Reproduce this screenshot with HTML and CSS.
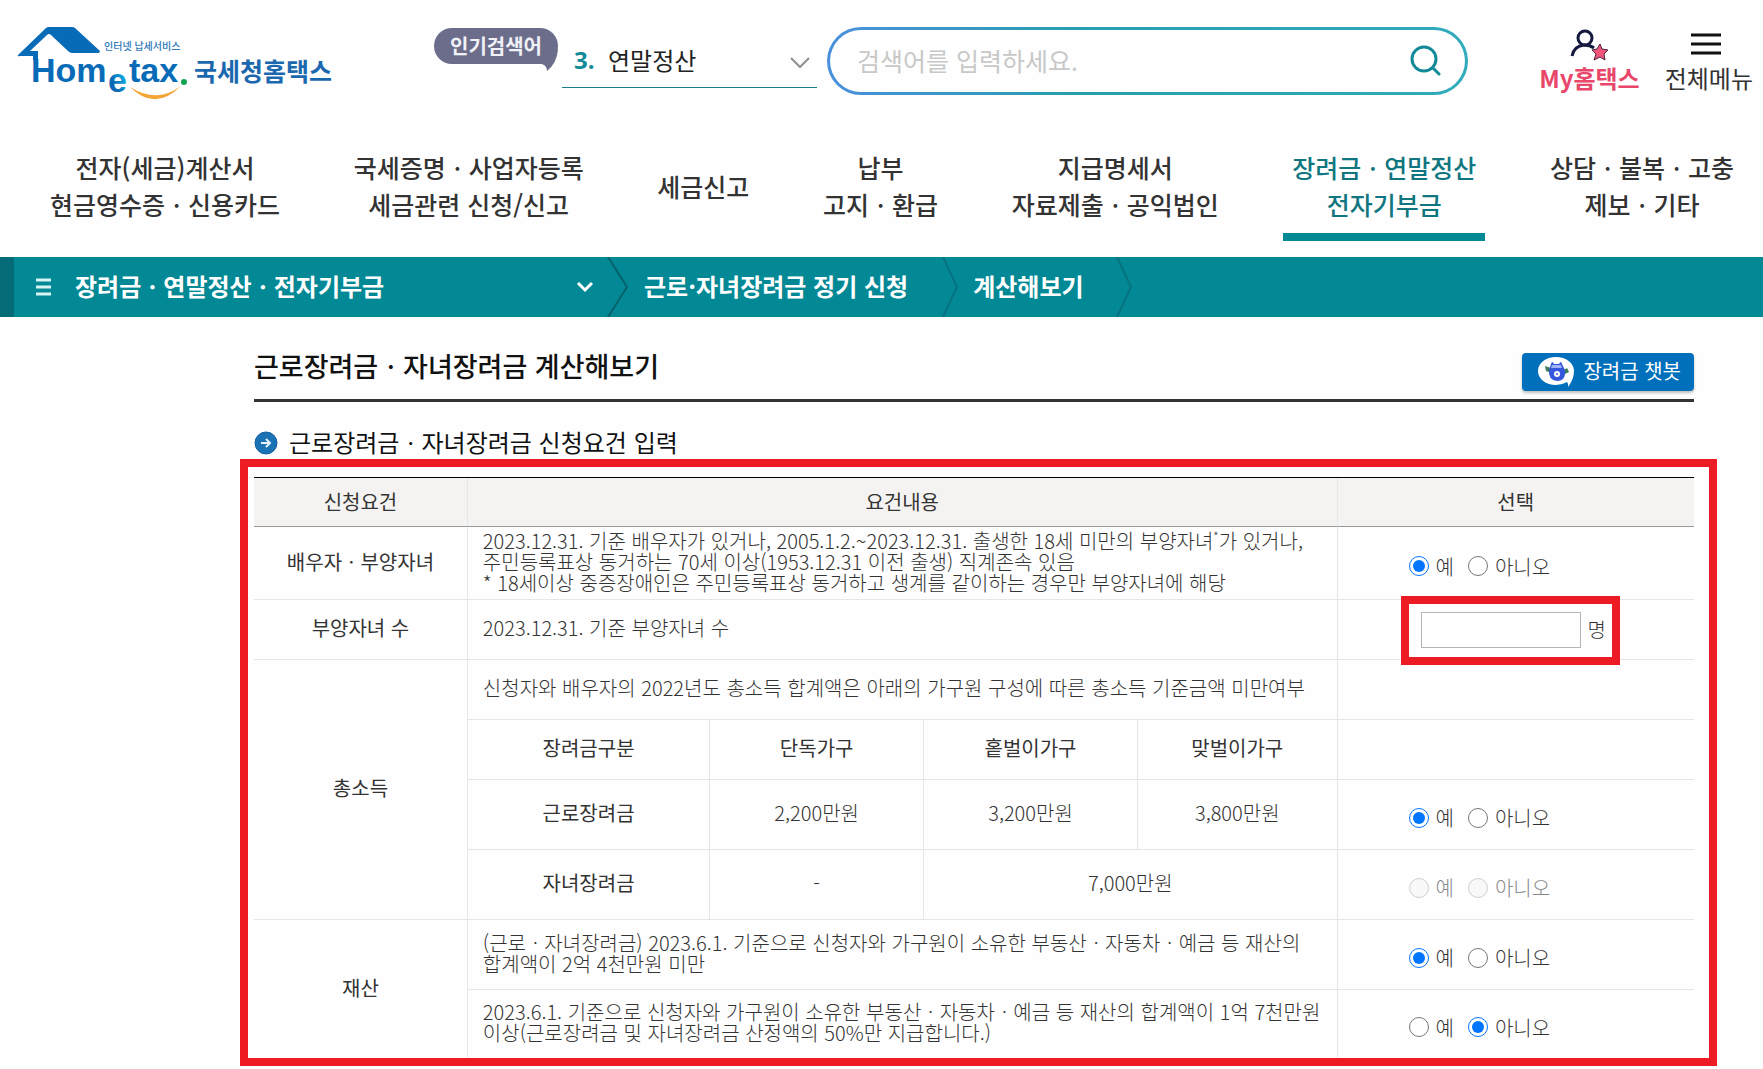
FILE: index.html
```html
<!DOCTYPE html>
<html lang="ko">
<head>
<meta charset="utf-8">
<title>국세청홈택스 - 근로장려금ㆍ자녀장려금 계산해보기</title>
<meta name="viewport" content="width=device-width, initial-scale=1">
<link rel="stylesheet" href="styles.css">
</head>
<body>
<header class="header">
  <a class="logo" href="#" aria-label="국세청홈택스">
    <svg width="320" height="80" viewBox="16 22 320 80" aria-hidden="true">
      <defs>
        <linearGradient id="eFill" x1="0" y1="1" x2="1" y2="0">
          <stop offset="0.35" stop-color="#0a6ab6"/>
          <stop offset="0.8" stop-color="#10b5e8"/>
        </linearGradient>
      </defs>
      <path fill="#086bb7" d="M18 55 L46 28 Q47 27 49 27 H72 Q74 27 75 28 L100 51 Q100 53 98 53 H72 Q70 53 68 51 L51 35 Q49 33 47 35 L30 51 H38 V60 H33 V56 H20 Q17 57 18 55 Z"/>
      <text class="logo-latin" x="31" y="82">Hom</text>
      <text class="logo-latin" x="108" y="92" fill="url(#eFill)">e</text>
      <text class="logo-latin" x="129" y="82">tax</text>
      <circle cx="184" cy="82" r="3" fill="#12a352"/>
      <path fill="#f3a536" d="M130 87 Q155 112 181 86 Q157 104 130 87 Z"/>
      <text class="logo-slogan" x="104" y="50">인터넷 납세서비스</text>
      <text class="logo-name" x="194" y="81">국세청홈택스</text>
    </svg>
  </a>

  <div class="popular">
    <span class="popular-badge">인기검색어
      <svg class="popular-tail" width="20" height="22" viewBox="0 0 20 22" aria-hidden="true"><path fill="#6b6d8a" d="M20 0 Q19 14 9 22 Q9 15 0 14 Z"/></svg>
    </span>
    <div class="popular-pick">
      <label for="popular-term">3.</label>
      <select id="popular-term"><option>연말정산</option></select>
      <svg class="popular-arrow" width="20" height="14" viewBox="0 0 20 14" aria-hidden="true"><path d="M1 2 L10 11 L19 2" fill="none" stroke="#8f8f8f" stroke-width="2"/></svg>
    </div>
  </div>

  <form class="search">
    <input type="text" placeholder="검색어를 입력하세요." aria-label="검색어">
    <button type="button" aria-label="검색">
      <svg width="32" height="32" viewBox="0 0 32 32" fill="none" stroke="#128a98" stroke-width="3" stroke-linecap="round"><circle cx="15" cy="15" r="12"/><path d="M24 24 L30 30"/></svg>
    </button>
  </form>

  <div class="tools">
    <a class="tool tool-my" href="#">
      <svg width="40" height="34" viewBox="0 0 40 34" aria-hidden="true">
        <g fill="none" stroke="#15193f" stroke-width="3"><circle cx="16" cy="10" r="7"/><path d="M3 28 Q5 18 15 17 Q21 17 25 20"/></g>
        <path d="M31 16 L33 21 L39 22 L35 26 L36 32 L31 29 L25 32 L27 26 L23 22 L28 21 Z" fill="#f2557a" stroke="#4a2340" stroke-width="1" stroke-linejoin="round"/>
      </svg>
      <span>My홈택스</span>
    </a>
    <a class="tool" href="#">
      <svg width="36" height="34" viewBox="0 0 36 34" aria-hidden="true"><path d="M0 7 H30 M0 16 H30 M0 25 H30" stroke="#111" stroke-width="3"/></svg>
      <span>전체메뉴</span>
    </a>
  </div>
</header>

<nav class="menu" aria-label="주 메뉴">
  <a href="#">전자(세금)계산서<br>현금영수증ㆍ신용카드</a>
  <a href="#">국세증명ㆍ사업자등록<br>세금관련 신청/신고</a>
  <a href="#">세금신고</a>
  <a href="#">납부<br>고지ㆍ환급</a>
  <a href="#">지급명세서<br>자료제출ㆍ공익법인</a>
  <a href="#" class="active">장려금ㆍ연말정산<br>전자기부금</a>
  <a href="#">상담ㆍ불복ㆍ고충<br>제보ㆍ기타</a>
</nav>

<nav class="path" aria-label="현재 위치">
  <button type="button" class="path-root">
    <svg width="15" height="18" viewBox="0 0 15 18" aria-hidden="true"><path d="M0 2 H15 M0 9 H15 M0 16 H15" stroke="#d9f4f4" stroke-width="3"/></svg>
    <span>장려금ㆍ연말정산ㆍ전자기부금</span>
    <svg class="path-arrow" width="18" height="14" viewBox="0 0 18 14" aria-hidden="true"><path d="M2 3 L9 10 L16 3" fill="none" stroke="#fff" stroke-width="3"/></svg>
  </button>
  <svg class="path-sep" width="22" height="60" viewBox="0 0 22 60" aria-hidden="true"><path d="M1 0 L20 30 L1 60" fill="none" stroke="#05626d" stroke-width="2"/></svg>
  <a class="path-sub" href="#">근로·자녀장려금 정기 신청</a>
  <svg class="path-sep" width="16" height="60" viewBox="0 0 16 60" aria-hidden="true"><path d="M1 0 L15 30 L1 60" fill="none" stroke="#077280" stroke-width="2"/></svg>
  <a class="path-leaf" href="#">계산해보기</a>
  <svg class="path-sep" width="16" height="60" viewBox="0 0 16 60" aria-hidden="true"><path d="M1 0 L15 30 L1 60" fill="none" stroke="#077280" stroke-width="2"/></svg>
</nav>

<main class="content">
  <div class="title-row">
    <h1>근로장려금ㆍ자녀장려금 계산해보기</h1>
    <button type="button" class="chatbot">
      <svg width="38" height="32" viewBox="0 0 38 32" aria-hidden="true">
        <path fill="#fff" d="M18 1 C28 1 36 7 36 15 C36 20 34 26 30 31 Q31 28 29 26 Q24 29 18 29 C8 29 0 23 0 15 C0 7 8 1 18 1 Z"/>
        <path fill="#3a7d58" d="M7 10 L16 13 L14 17 L8 15 Z M29 12 L31 16 L25 19 L23 16 Z"/>
        <path fill="#3657dd" d="M13 8 Q14 4 16 8 L21 8 Q23 4 24 8 L27 14 Q28 25 19 25 Q10 24 11 14 Z"/>
        <path fill="#9fb2fa" d="M14 9 H23 L24 12 H13 Z"/>
        <circle cx="19" cy="18" r="3" fill="#fff"/><circle cx="19" cy="18" r="1" fill="#3657dd"/>
      </svg>
      <span>장려금 챗봇</span>
    </button>
  </div>

  <h2>
    <svg width="24" height="24" viewBox="0 0 24 24" aria-hidden="true"><circle cx="12" cy="12" r="11" fill="#1a73b5" stroke="#155f9e" stroke-width="1"/><path d="M7 12 H16 M12 8 L16 12 L12 16" fill="none" stroke="#e6f3ff" stroke-width="2"/></svg>
    <span>근로장려금ㆍ자녀장려금 신청요건 입력</span>
  </h2>

  <div class="marked">
    <table>
      <colgroup><col class="c-item"><col class="c-kind"><col class="c-home"><col class="c-home"><col class="c-last"><col class="c-pick"></colgroup>
      <thead>
        <tr><th scope="col">신청요건</th><th scope="col" colspan="4">요건내용</th><th scope="col">선택</th></tr>
      </thead>
      <tbody>
        <tr class="row-tall">
          <th scope="row">배우자ㆍ부양자녀</th>
          <td colspan="4">2023.12.31. 기준 배우자가 있거나, 2005.1.2.~2023.12.31. 출생한 18세 미만의 부양자녀<sup>*</sup>가 있거나,<br>주민등록표상 동거하는 70세 이상(1953.12.31 이전 출생) 직계존속 있음<br>* 18세이상 중증장애인은 주민등록표상 동거하고 생계를 같이하는 경우만 부양자녀에 해당</td>
          <td class="pick"><div class="choice"><label><input type="radio" name="spouse" checked>예</label><label><input type="radio" name="spouse">아니오</label></div></td>
        </tr>
        <tr class="row-short">
          <th scope="row">부양자녀 수</th>
          <td colspan="4">2023.12.31. 기준 부양자녀 수</td>
          <td class="count"><div class="count-box"><input type="text" id="children"><label for="children">명</label></div></td>
        </tr>
        <tr class="row-short">
          <th scope="row" rowspan="4">총소득</th>
          <td colspan="4">신청자와 배우자의 2022년도 총소득 합계액은 아래의 가구원 구성에 따른 총소득 기준금액 미만여부</td>
          <td></td>
        </tr>
        <tr class="row-short">
          <th scope="col">장려금구분</th><th scope="col">단독가구</th><th scope="col">홑벌이가구</th><th scope="col">맞벌이가구</th>
          <td></td>
        </tr>
        <tr class="row-mid">
          <th scope="row">근로장려금</th><td class="amount">2,200만원</td><td class="amount">3,200만원</td><td class="amount">3,800만원</td>
          <td class="pick"><div class="choice"><label><input type="radio" name="work" checked>예</label><label><input type="radio" name="work">아니오</label></div></td>
        </tr>
        <tr class="row-mid">
          <th scope="row">자녀장려금</th><td class="amount">-</td><td class="amount" colspan="2">7,000만원</td>
          <td class="pick"><div class="choice off"><label><input type="radio" name="child" disabled>예</label><label><input type="radio" name="child" disabled>아니오</label></div></td>
        </tr>
        <tr class="row-mid">
          <th scope="row" rowspan="2">재산</th>
          <td colspan="4">(근로ㆍ자녀장려금) 2023.6.1. 기준으로 신청자와 가구원이 소유한 부동산ㆍ자동차ㆍ예금 등 재산의<br>합계액이 2억 4천만원 미만</td>
          <td class="pick"><div class="choice"><label><input type="radio" name="asset1" checked>예</label><label><input type="radio" name="asset1">아니오</label></div></td>
        </tr>
        <tr class="row-end">
          <td colspan="4">2023.6.1. 기준으로 신청자와 가구원이 소유한 부동산ㆍ자동차ㆍ예금 등 재산의 합계액이 1억 7천만원<br>이상(근로장려금 및 자녀장려금 산정액의 50%만 지급합니다.)</td>
          <td class="pick"><div class="choice"><label><input type="radio" name="asset2">예</label><label><input type="radio" name="asset2" checked>아니오</label></div></td>
        </tr>
      </tbody>
    </table>
  </div>
</main>
</body>
</html>
```
FILE: styles.css
```css
* { box-sizing: border-box; }

body {
  margin: 0;
  background: #fefefe;
  color: #333;
  font-family: "Noto Sans CJK KR", sans-serif;
  font-size: 20px;
}

a { color: inherit; text-decoration: none; }

button, input, select { font: inherit; color: inherit; }

svg { display: block; flex: none; }

/* header */
.header {
  display: flex;
  align-items: flex-start;
  height: 124px;
  padding: 22px 10px 0 16px;
}

.logo { flex: none; margin-right: 98px; }

.logo-latin {
  font: bold 34px "Liberation Sans", sans-serif;
  fill: #086bb7;
}

.logo-latin[fill] { fill: url(#eFill); }

.logo-slogan { font-size: 10px; font-weight: 500; fill: #2f78ba; }

.logo-name { font-size: 25px; font-weight: 700; fill: #1b68af; }

.popular { display: flex; flex: none; gap: 4px; }

.popular-badge {
  position: relative;
  width: 124px;
  height: 36px;
  margin-top: 6px;
  border-radius: 18px;
  background: #6b6d8a;
  color: #f1f1f8;
  font-weight: 700;
  font-size: 20px;
  line-height: 35px;
  text-align: center;
}

.popular-tail { position: absolute; right: 0; bottom: -7px; }

.popular-pick {
  position: relative;
  display: flex;
  align-items: center;
  width: 255px;
  height: 66px;
  padding: 10px 0 0 12px;
  border-bottom: 1px solid #197f8b;
}

.popular-pick label {
  width: 34px;
  color: #128a98;
  font: bold 24px "Open Sans", sans-serif;
}

.popular-pick select {
  flex: 1;
  padding: 0;
  border: 0;
  background: transparent;
  color: #222;
  font-size: 24px;
  line-height: 36px;
  appearance: none;
}

.popular-arrow { position: absolute; right: 7px; top: 34px; pointer-events: none; }

.search {
  display: flex;
  flex: 1;
  align-items: center;
  height: 68px;
  margin: 5px 71px 0 10px;
  padding: 0 24px 3px 27px;
  border: 3px solid transparent;
  border-radius: 34px;
  background:
    linear-gradient(#fefefe, #fefefe) padding-box,
    linear-gradient(90deg, #4a90dc, #279fae 40%, #2fabbc) border-box;
}

.search input {
  flex: 1;
  min-width: 0;
  padding: 0;
  border: 0;
  outline: 0;
  background: transparent;
  font-size: 25px;
}

.search input::placeholder { color: #c8c8c8; opacity: 1; }

.search button { padding: 0; border: 0; background: transparent; }

.tools { display: flex; flex: none; gap: 25px; margin-top: 6px; }

.tool {
  display: flex;
  flex-direction: column;
  align-items: center;
  font-size: 24px;
  line-height: 32px;
}

.tool-my { color: #e8476b; font-weight: 700; }

/* main menu */
.menu {
  display: flex;
  justify-content: space-between;
  height: 133px;
  padding: 25px 29px 16px 50px;
  font-size: 25px;
  font-weight: 500;
  line-height: 37px;
  text-align: center;
  white-space: nowrap;
}

.menu a { display: flex; flex-direction: column; justify-content: center; padding-bottom: 18px; }

.menu .active {
  margin: 0 -9px;
  padding: 0 9px 10px;
  border-bottom: 8px solid #028995;
  color: #107680;
}

/* location bar */
.path {
  display: flex;
  align-items: center;
  height: 60px;
  border-left: 14px solid #056b77;
  background: #028995;
  color: #fff;
  font-size: 24px;
  font-weight: 700;
  white-space: nowrap;
}

.path-root {
  display: flex;
  align-items: center;
  gap: 24px;
  width: 593px;
  height: 60px;
  padding: 0 13px 0 22px;
  border: 0;
  background: transparent;
}

.path-root span { padding-bottom: 4px; }

.path-arrow { margin-left: auto; }

.path-sub { padding: 0 34px 4px 15px; }

.path-leaf { padding: 0 32px 4px 15px; }

/* content */
.content { padding: 36px 69px 0 254px; }

.title-row {
  display: flex;
  align-items: flex-start;
  justify-content: space-between;
  height: 49px;
  border-bottom: 3px solid #333;
}

h1 {
  margin: 0;
  color: #111;
  font-size: 27px;
  font-weight: 500;
  line-height: 26px;
}

.chatbot {
  display: flex;
  align-items: center;
  gap: 7px;
  height: 38px;
  padding: 0 13px 0 16px;
  border: 0;
  border-radius: 4px;
  background: #0070bc;
  box-shadow: 0 2px 3px rgb(0 0 0 / 25%);
  color: #fff;
}

.chatbot span { padding-bottom: 3px; }

h2 {
  display: flex;
  align-items: center;
  gap: 11px;
  height: 57px;
  margin: 0;
  padding-top: 25px;
  color: #111;
  font-size: 24px;
  font-weight: 400;
  line-height: 32px;
}

h2 span { padding-bottom: 3px; }

/* highlighted requirement table */
.marked {
  margin: 0 -23px 3px -14px;
  padding: 10px 15px 0 6px;
  border: 8px solid #ed1c24;
}

table {
  width: 100%;
  border-collapse: separate;
  border-spacing: 0;
  border-top: 1px solid #000;
  table-layout: fixed;
  line-height: 21px;
}

.c-item { width: 15%; }
.c-kind { width: 17%; }
.c-home { width: 15%; }
.c-last { width: 14%; }
.c-pick { width: 25%; }

th, td {
  padding: 0 0 4px;
  border-bottom: 1px solid #e6e6e6;
  border-right: 1px solid #e6e6e6;
}

th { font-weight: 400; }

td { padding-left: 15px; font-weight: 300; text-align: left; }

tr > :last-child { border-right: 0; }

tbody tr:last-child td, tbody th[rowspan="2"] { border-bottom: 0; }

thead th {
  height: 49px;
  padding-bottom: 2px;
  border-bottom-color: #999;
  background: #f5f3f2;
}

.row-tall { height: 73px; }
.row-short { height: 60px; }
.row-mid { height: 70px; }
.row-end { height: 68px; }

.amount { padding-left: 0; text-align: center; }

sup { font-size: 12px; line-height: 0; }

.pick { padding: 6px 0 0 71px; }

.choice { display: flex; gap: 14px; }

.choice label { display: flex; align-items: center; gap: 7px; }

.choice input { width: 20px; height: 20px; margin: 0; }

.off { color: #888; }

.count { padding: 0 0 0 83px; }

.count-box { position: relative; display: flex; align-items: center; width: 184px; gap: 7px; }

.count-box input {
  width: 160px;
  height: 36px;
  border: 1px solid #b5b5b5;
  background: #fff;
}

.count-box::before {
  content: "";
  position: absolute;
  inset: -16px -15px -17px -20px;
  border: 8px solid #ed1c24;
  pointer-events: none;
}
```
